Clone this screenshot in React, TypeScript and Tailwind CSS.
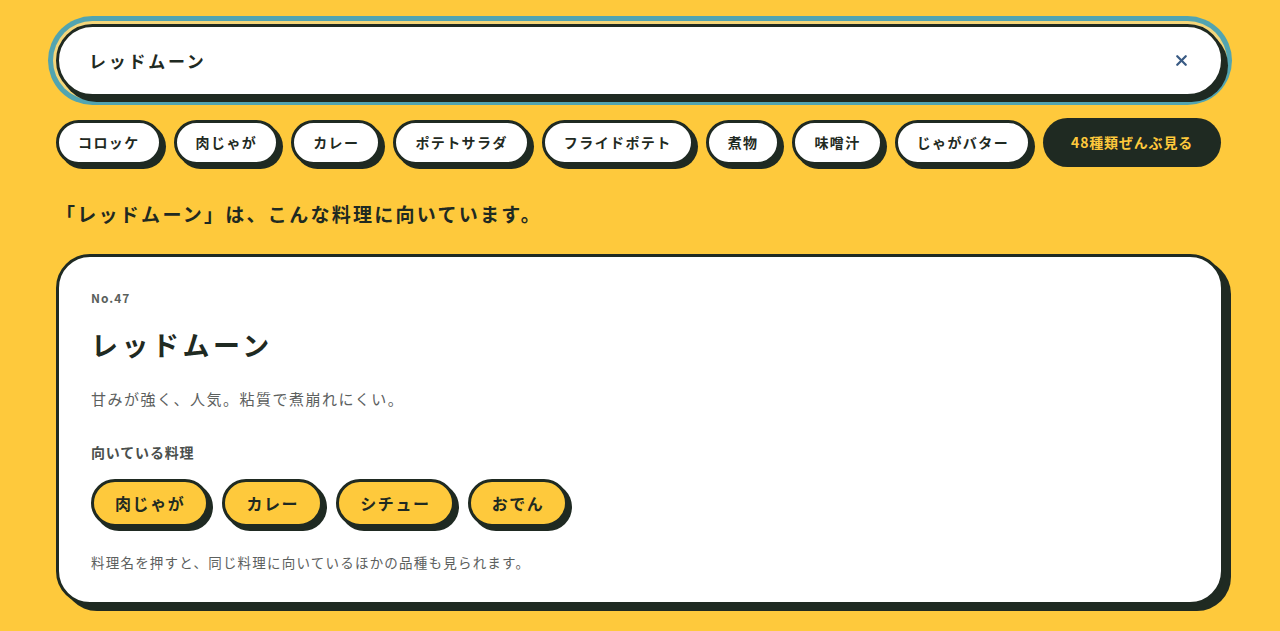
import { X } from "lucide-react";

const DISHES = [
  "コロッケ",
  "肉じゃが",
  "カレー",
  "ポテトサラダ",
  "フライドポテト",
  "煮物",
  "味噌汁",
  "じゃがバター",
];

const SUITED = ["肉じゃが", "カレー", "シチュー", "おでん"];

const App = () => {
  return (
    <div
      className="min-h-[631px] w-full bg-[#fec93c] px-14 pt-6 text-[#1f2a22]"
      style={{ fontFamily: '"Noto Sans CJK JP", "Noto Sans", sans-serif' }}
    >
      {/* search */}
      <div className="flex h-[73px] w-full items-center justify-between rounded-full border-[3px] border-[#1f2a22] bg-white pl-[30px] pr-[31px] shadow-[4px_5px_0_#1f2a22,0_0_0_3px_#f4d67a,0_0_0_8px_#52a4b0]">
        <p className="text-[17px] font-bold tracking-[0.16em]">レッドムーン</p>
        <X className="h-[17px] w-[17px] text-[#3a5b84]" strokeWidth={3.2} />
      </div>

      {/* dish chips */}
      <div className="mt-[21px] flex items-center gap-3">
        {DISHES.map((dish) => (
          <button
            key={dish}
            className="flex h-[45px] shrink-0 items-center whitespace-nowrap rounded-full border-[3px] border-[#1f2a22] bg-white px-[19px] text-[14px] font-bold tracking-[0.1em] shadow-[4px_4px_0_#1f2a22]"
          >
            {dish}
          </button>
        ))}
        <button className="flex h-[49px] shrink-0 items-center whitespace-nowrap rounded-full bg-[#1f2a22] px-[28px] text-[14px] font-bold tracking-[0.06em] text-[#fec93c]">
          48種類ぜんぶ見る
        </button>
      </div>

      <h2 className="mt-[33px] text-[19px] leading-[28px] font-bold tracking-[0.12em]">
        「レッドムーン」は、こんな料理に向いています。
      </h2>

      {/* detail card */}
      <div className="mt-[26px] rounded-[34px] border-[3px] border-[#1f2a22] bg-white px-8 pt-[33px] pb-[30px] shadow-[7px_6px_0_#1f2a22]">
        <p className="text-[12px] leading-4 font-bold tracking-[0.08em] text-[#5a5f5c]">
          No.47
        </p>
        <h1 className="mt-[21px] text-[27px] leading-9 font-bold tracking-[0.13em]">
          レッドムーン
        </h1>
        <p className="mt-6 text-[15px] leading-6 tracking-[0.1em] text-[#5c605e]">
          甘みが強く、人気。粘質で煮崩れにくい。
        </p>
        <p className="mt-[31px] text-[14px] leading-5 font-bold tracking-[0.06em] text-[#4a4f4c]">
          向いている料理
        </p>
        <div className="mt-[17px] flex items-center gap-[13px]">
          {SUITED.map((dish) => (
            <button
              key={dish}
              className="flex h-[48px] shrink-0 items-center whitespace-nowrap rounded-full border-[3px] border-[#1f2a22] bg-[#fec93c] px-[21px] text-[16px] font-bold tracking-[0.1em] shadow-[4px_4px_0_#1f2a22]"
            >
              {dish}
            </button>
          ))}
        </div>
        <p className="mt-[25px] text-[13.5px] leading-5 tracking-[0.09em] text-[#5c605e]">
          料理名を押すと、同じ料理に向いているほかの品種も見られます。
        </p>
      </div>
    </div>
  );
};

export default App;
